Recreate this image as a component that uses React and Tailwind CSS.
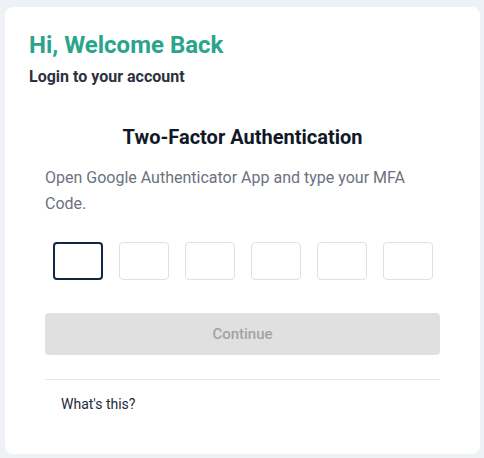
export default function App() {
  const digits = [0, 1, 2, 3, 4, 5]

  return (
    <div className="w-[484px] h-[458px] bg-[#eef1f5] pl-[5px] pr-[4px] pt-[7px] pb-[4px] font-['Roboto',sans-serif]">
      <div className="h-full bg-white rounded-lg px-6 pt-6">
        <h1 className="text-2xl leading-[28px] font-bold text-[#2aa48a]">Hi, Welcome Back</h1>
        <p className="mt-2 text-base leading-5 font-bold text-[#2e3040]">Login to your account</p>

        <div className="px-4">
          <h2 className="mt-9 text-center text-xl leading-7 font-bold text-[#111827]">
            Two-Factor Authentication
          </h2>
          <p className="mt-[14px] text-base leading-[26px] text-[#6b7280]">
            Open Google Authenticator App and type your MFA Code.
          </p>

          <div className="mt-[25px] flex justify-center gap-4">
            {digits.map((d) => (
              <input
                key={d}
                type="text"
                maxLength={1}
                className={
                  d === 0
                    ? 'w-[50px] h-[38px] rounded border-2 border-[#0f2745] outline-none text-center'
                    : 'w-[50px] h-[38px] rounded border border-[#e0e0e0] outline-none text-center'
                }
              />
            ))}
          </div>

          <button
            type="button"
            disabled
            className="mt-[33px] w-full h-[42px] rounded bg-[#e0e0e0] text-[15px] font-medium text-[#a3a3a3]"
          >
            Continue
          </button>

          <div className="mt-6 border-t border-[#e5e7eb]" />

          <p className="mt-[14px] pl-4 text-sm leading-5 text-[#1e293b]">What's this?</p>
        </div>
      </div>
    </div>
  )
}
